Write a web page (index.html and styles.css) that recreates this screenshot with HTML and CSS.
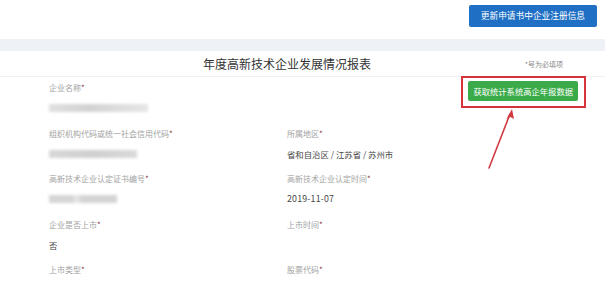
FILE: index.html
```html
<!DOCTYPE html>
<html lang="zh">
<head>
<meta charset="utf-8">
<link rel="stylesheet" href="styles.css">
</head>
<body>
<div class="topbar">
  <button class="btn-blue">更新申请书中企业注册信息</button>
</div>
<div class="band"></div>
<div class="panel">
  <div class="head">
    <div></div>
    <h1 class="title">年度高新技术企业发展情况报表</h1>
    <div class="note">*号为必填项</div>
  </div>
  <div class="form">
    <div class="field">
      <div class="label">企业名称<span class="req">*</span></div>
      <div class="value"><span class="blur w1"></span></div>
    </div>
    <div class="field action">
      <div class="btn-wrap">
        <button class="btn-green">获取统计系统高企年报数据</button>
        <span class="mark"></span>
        <svg class="arrow" width="40" height="70" viewBox="0 0 40 70">
          <line x1="6" y1="63" x2="27" y2="9" stroke="#d23a40" stroke-width="1.6" stroke-linecap="round"/>
          <path d="M29 4 L31 14 L27.5 12 L23.5 14 Z" fill="#d23a40"/>
        </svg>
      </div>
    </div>
    <div class="field">
      <div class="label">组织机构代码或统一社会信用代码<span class="req">*</span></div>
      <div class="value"><span class="blur w2"></span></div>
    </div>
    <div class="field">
      <div class="label">所属地区<span class="req">*</span></div>
      <div class="value">省和自治区 / 江苏省 / 苏州市</div>
    </div>
    <div class="field">
      <div class="label">高新技术企业认定证书编号<span class="req">*</span></div>
      <div class="value"><span class="blur w3"></span></div>
    </div>
    <div class="field">
      <div class="label">高新技术企业认定时间<span class="req">*</span></div>
      <div class="value num">2019-11-07</div>
    </div>
    <div class="field">
      <div class="label">企业是否上市<span class="req">*</span></div>
      <div class="value">否</div>
    </div>
    <div class="field">
      <div class="label">上市时间<span class="req">*</span></div>
      <div class="value"></div>
    </div>
    <div class="field">
      <div class="label">上市类型<span class="req">*</span></div>
      <div class="value"></div>
    </div>
    <div class="field">
      <div class="label">股票代码<span class="req">*</span></div>
      <div class="value"></div>
    </div>
  </div>
</div>
</body>
</html>
```

FILE: styles.css
```css
* { box-sizing: border-box; }
html, body { margin: 0; padding: 0; background: #fff; }
body {
  font-family: "Noto Sans CJK SC", "Noto Sans", sans-serif;
  width: 605px;
  height: 290px;
  overflow: hidden;
}
.topbar {
  height: 39px;
  display: flex;
  justify-content: flex-end;
  align-items: flex-start;
  padding: 5px 8px 0 0;
}
.btn-blue {
  height: 22px;
  padding: 0 12px;
  border: 0;
  border-radius: 2px;
  background: #1f6fc4;
  color: #fff;
  font-family: inherit;
  font-size: 8.7px;
  line-height: 22px;
}
.band {
  height: 12px;
  background: #eef1f5;
}
.panel { background: #fff; }
.head {
  height: 26px;
  display: grid;
  grid-template-columns: 203px auto 1fr;
  align-items: center;
  border-bottom: 1px solid #eef0f3;
}
.title {
  margin: 0;
  font-size: 12px;
  font-weight: normal;
  color: #333;
  line-height: 26px;
}
.note {
  justify-self: end;
  padding-right: 42px;
  font-size: 7px;
  color: #888;
}
.form {
  display: grid;
  grid-template-columns: 238px 291px;
  padding: 5px 0 0 49px;
  row-gap: 13.5px;
}
.field { height: 32px; }
.label {
  font-size: 8px;
  line-height: 12px;
  color: #a3a3a3;
  white-space: nowrap;
}
.req { color: #8a3a3a; }
.value {
  margin-top: 8px;
  height: 12px;
  font-size: 8.4px;
  line-height: 12px;
  color: #484848;
  display: flex;
  align-items: center;
  white-space: nowrap;
}
.value.num { font-size: 8.8px; letter-spacing: 0.2px; }
.blur {
  display: block;
  height: 8px;
  background: #d9d9d9;
  filter: blur(1.6px);
}
.w1 { width: 99px; background: linear-gradient(90deg, #e0e0e0, #d2d2d2 40%, #dddddd 70%, #e6e6e6); }
.w2 { width: 88px; background: linear-gradient(90deg, #d8d8d8, #cfcfcf 50%, #dadada); }
.w3 { width: 68px; background: linear-gradient(90deg, #d6d6d6 0 35%, #eaeaea 40%, #d4d4d4 48% 100%); }
.action {
  display: flex;
  justify-content: flex-end;
  align-items: flex-start;
}
.btn-wrap {
  position: relative;
  margin-top: -1px;
}
.btn-green {
  display: block;
  height: 20px;
  padding: 0 5px;
  border: 0;
  border-radius: 2px;
  background: #3aab48;
  color: #fff;
  font-family: inherit;
  font-size: 8.3px;
  line-height: 20px;
}
.mark {
  position: absolute;
  left: -7px;
  right: -8px;
  top: -5px;
  bottom: -7px;
  border: 2px solid #d7333b;
}
.arrow {
  position: absolute;
  left: 15px;
  top: 24px;
}
```
